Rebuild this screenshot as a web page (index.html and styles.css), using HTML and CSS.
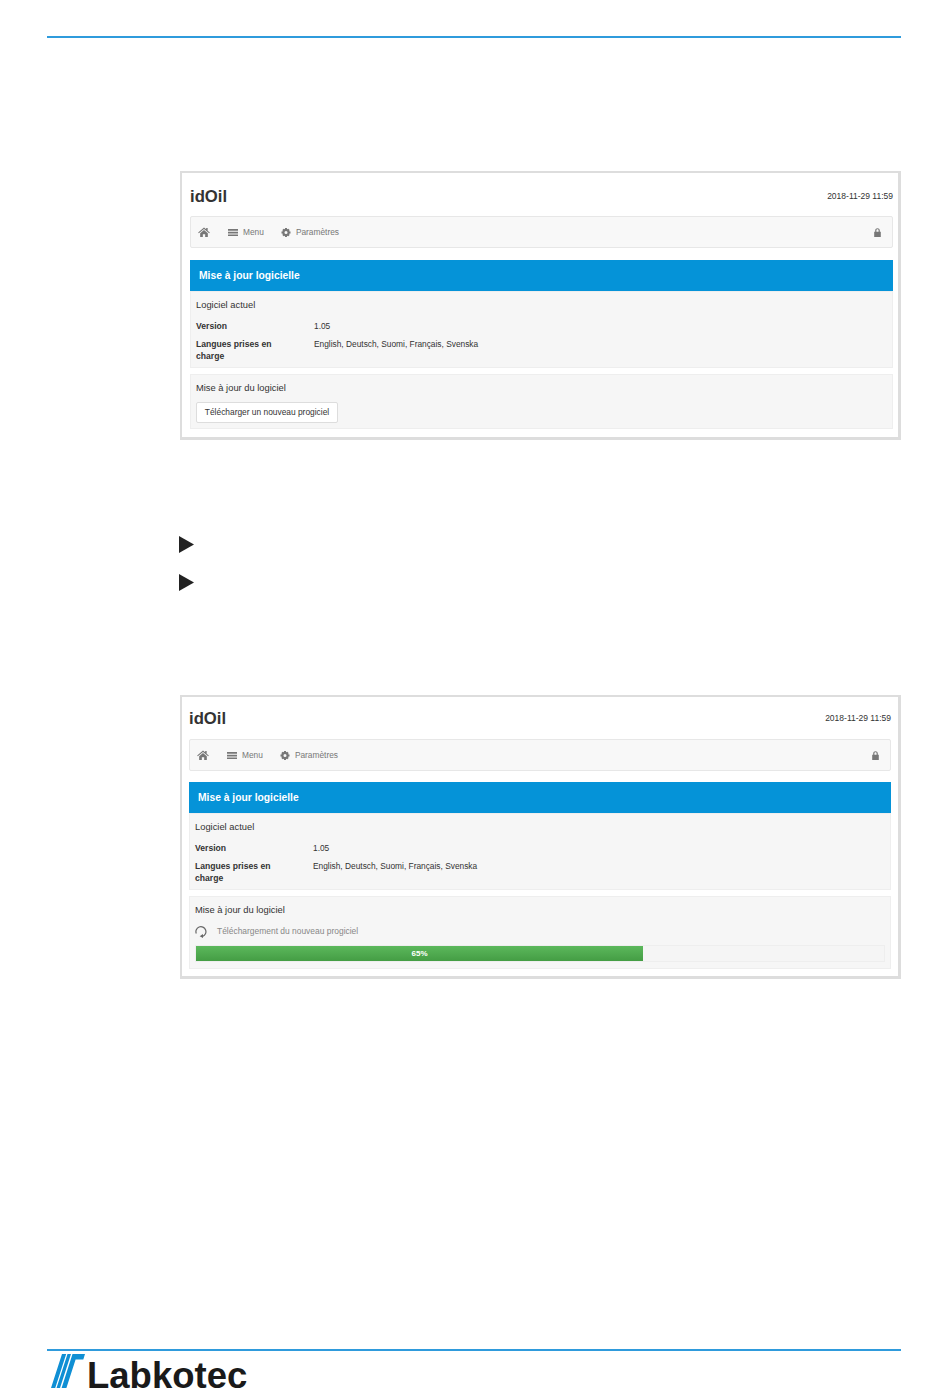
FILE: index.html
```html
<!DOCTYPE html>
<html lang="fr">
<head>
  <meta charset="UTF-8" />
  <title>idOil - Mise à jour logicielle</title>
  <link rel="stylesheet" href="styles.css">
</head>
<body>
<div class="page">
  <div class="top-rule"></div>

  <div class="screen screen-first">
    <div class="screen-head">
      <span class="brand">idOil</span>
      <span class="stamp">2018-11-29 11:59</span>
    </div>
    <div class="navbar">
      <svg class="nav-home" viewBox="0 0 14 12"><path d="M7 0.5 L9.6 2.8 V1.2 H11.4 V4.4 L14 6.7 L13.2 7.6 L7 2.3 L0.8 7.6 L0 6.7 Z M2.4 7.6 L7 3.6 L11.6 7.6 V12 H8.4 V8.6 H5.6 V12 H2.4 Z"/></svg>
      <span class="nav-item">
        <svg class="nav-icon" viewBox="0 0 10 8"><path d="M0 0.5 H10 V2.2 H0 Z M0 3.2 H10 V4.9 H0 Z M0 5.9 H10 V7.6 H0 Z"/></svg>
        Menu
      </span>
      <span class="nav-item">
        <svg class="nav-icon" viewBox="0 0 10 10"><path fill-rule="evenodd" d="M4 0 H6 L6.3 1.4 L7.6 0.9 L9 2.3 L8.4 3.6 L10 4 V6 L8.4 6.4 L9 7.7 L7.6 9.1 L6.3 8.6 L6 10 H4 L3.7 8.6 L2.4 9.1 L1 7.7 L1.6 6.4 L0 6 V4 L1.6 3.6 L1 2.3 L2.4 0.9 L3.7 1.4 Z M5 3.3 A1.7 1.7 0 1 0 5 6.7 A1.7 1.7 0 1 0 5 3.3 Z"/></svg>
        Paramètres
      </span>
      <svg class="nav-lock" viewBox="0 0 7 9"><path fill-rule="evenodd" d="M0.2 3.8 H1.2 V2.4 C1.2 -0.6 5.8 -0.6 5.8 2.4 V3.8 H6.8 V9 H0.2 Z M2.4 3.8 H4.6 V2.4 C4.6 1 2.4 1 2.4 2.4 Z"/></svg>
    </div>
    <div class="banner">Mise à jour logicielle</div>
    <div class="panel panel-current">
      <div class="panel-title">Logiciel actuel</div>
      <div class="info-row"><b class="info-key">Version</b><span>1.05</span></div>
      <div class="info-row"><b class="info-key">Langues prises en charge</b><span>English, Deutsch, Suomi, Français, Svenska</span></div>
    </div>
    <div class="panel panel-update">
      <div class="panel-title">Mise à jour du logiciel</div>
      <button class="upload-btn">Télécharger un nouveau progiciel</button>
    </div>
  </div>

  <div class="steps">
    <div class="step-arrow"></div>
    <div class="step-arrow"></div>
  </div>

  <div class="screen screen-second">
    <div class="screen-head">
      <span class="brand">idOil</span>
      <span class="stamp">2018-11-29 11:59</span>
    </div>
    <div class="navbar">
      <svg class="nav-home" viewBox="0 0 14 12"><path d="M7 0.5 L9.6 2.8 V1.2 H11.4 V4.4 L14 6.7 L13.2 7.6 L7 2.3 L0.8 7.6 L0 6.7 Z M2.4 7.6 L7 3.6 L11.6 7.6 V12 H8.4 V8.6 H5.6 V12 H2.4 Z"/></svg>
      <span class="nav-item">
        <svg class="nav-icon" viewBox="0 0 10 8"><path d="M0 0.5 H10 V2.2 H0 Z M0 3.2 H10 V4.9 H0 Z M0 5.9 H10 V7.6 H0 Z"/></svg>
        Menu
      </span>
      <span class="nav-item">
        <svg class="nav-icon" viewBox="0 0 10 10"><path fill-rule="evenodd" d="M4 0 H6 L6.3 1.4 L7.6 0.9 L9 2.3 L8.4 3.6 L10 4 V6 L8.4 6.4 L9 7.7 L7.6 9.1 L6.3 8.6 L6 10 H4 L3.7 8.6 L2.4 9.1 L1 7.7 L1.6 6.4 L0 6 V4 L1.6 3.6 L1 2.3 L2.4 0.9 L3.7 1.4 Z M5 3.3 A1.7 1.7 0 1 0 5 6.7 A1.7 1.7 0 1 0 5 3.3 Z"/></svg>
        Paramètres
      </span>
      <svg class="nav-lock" viewBox="0 0 7 9"><path fill-rule="evenodd" d="M0.2 3.8 H1.2 V2.4 C1.2 -0.6 5.8 -0.6 5.8 2.4 V3.8 H6.8 V9 H0.2 Z M2.4 3.8 H4.6 V2.4 C4.6 1 2.4 1 2.4 2.4 Z"/></svg>
    </div>
    <div class="banner">Mise à jour logicielle</div>
    <div class="panel panel-current">
      <div class="panel-title">Logiciel actuel</div>
      <div class="info-row"><b class="info-key">Version</b><span>1.05</span></div>
      <div class="info-row"><b class="info-key">Langues prises en charge</b><span>English, Deutsch, Suomi, Français, Svenska</span></div>
    </div>
    <div class="panel panel-progress">
      <div class="panel-title">Mise à jour du logiciel</div>
      <div class="download-row">
        <svg class="spinner" viewBox="0 0 12 12"><path d="M1.3 7.6 A5 5 0 1 1 7.6 10.4" fill="none" stroke="#666" stroke-width="1.2"/><path d="M8 7.9 L4.7 10.2 L8 12 Z" fill="#666"/></svg>
        <span>Téléchargement du nouveau progiciel</span>
      </div>
      <div class="progress">
        <div class="progress-bar" style="width: 65%">65%</div>
      </div>
    </div>
  </div>

  <div class="footer">
    <div class="bottom-rule"></div>
    <div class="logo">
      <svg class="logo-mark" viewBox="0 0 34 34"><path d="M11 0 H15.2 L4.2 34 H0 Z M16.5 0 H20 L9 34 H5.5 Z M21.5 0 H34 L32.3 5.5 H24.6 L15.4 34 H10.6 Z"/></svg>
      <span class="logo-text">Labkotec</span>
    </div>
  </div>
</div>
</body>
</html>
```

FILE: styles.css
```css
html, body {
  margin: 0;
  height: 1388px;
  overflow: hidden;
  background: #fff;
}
body {
  font-family: "Liberation Sans", Arial, sans-serif;
  color: #333;
}
.page {
  padding: 36px 49px 0 47px;
}
.top-rule, .bottom-rule {
  height: 2px;
  background: #2f9bdc;
}

.screen {
  box-sizing: border-box;
  margin-left: 133px;
  border: 2px solid #ddd;
  border-right-width: 3px;
  border-bottom-width: 3px;
  background: #fff;
  padding: 0 5px 0 8px;
  font-size: 8.35px;
}
.screen-first {
  margin-top: 133px;
  height: 269px;
}
.screen-second {
  margin-top: 104px;
  height: 284px;
  padding-left: 7px;
  padding-right: 7px;
}
.screen-head {
  box-sizing: border-box;
  display: flex;
  justify-content: space-between;
  align-items: center;
  height: 43px;
}
.screen-first .screen-head {
  padding-top: 3px;
}
.screen-second .screen-head {
  height: 42px;
}
.brand {
  margin-top: 2px;
  font-size: 16.7px;
  font-weight: bold;
}
.stamp {
  font-size: 8.5px;
}

.navbar {
  box-sizing: border-box;
  display: flex;
  align-items: center;
  height: 32px;
  margin-bottom: 12px;
  padding: 0 7px;
  background: #f8f8f8;
  border: 1px solid #e7e7e7;
  border-radius: 2px;
  color: #777;
}
.screen-second .navbar {
  margin-bottom: 11px;
}
.navbar svg {
  fill: #777;
}
.nav-home {
  width: 12px;
  height: 10px;
  margin-right: 18px;
}
.nav-item {
  display: flex;
  align-items: center;
  gap: 5px;
  margin-right: 17px;
}
.nav-icon {
  width: 10px;
  height: 9px;
}
.nav-lock {
  width: 7px;
  height: 9px;
  margin-left: auto;
  margin-right: 4px;
}

.banner {
  box-sizing: border-box;
  height: 31px;
  line-height: 31px;
  padding-left: 9px;
  background: #0593d8;
  color: #fff;
  font-size: 10.3px;
  font-weight: bold;
}
.screen-second .banner {
  line-height: 32px;
}

.panel {
  box-sizing: border-box;
  padding: 0 5px;
  background: #f6f6f6;
  border: 1px solid #eee;
}
.panel-current {
  height: 77px;
  margin-bottom: 6px;
}
.panel-update {
  height: 55px;
}
.panel-progress {
  height: 73px;
}
.panel-title {
  padding-top: 1px;
  font-size: 9.35px;
  line-height: 25px;
}
.panel-current .panel-title {
  margin-bottom: 2px;
}
.info-row {
  display: grid;
  grid-template-columns: 118px 1fr;
  line-height: 12px;
  margin-bottom: 6px;
}
.info-key {
  max-width: 90px;
  font-size: 8.6px;
}
.upload-btn {
  display: block;
  box-sizing: border-box;
  height: 21px;
  width: 142px;
  margin-top: 1px;
  padding: 0 0 2px;
  background: #fff;
  border: 1px solid #ddd;
  border-radius: 2px;
  font-family: inherit;
  font-size: 8.4px;
  color: #333;
}

.download-row {
  display: flex;
  align-items: center;
  gap: 10px;
  height: 15px;
  font-size: 8.45px;
  color: #888;
}
.spinner {
  width: 12px;
  height: 12px;
  margin-top: 3px;
}
.progress {
  box-sizing: border-box;
  height: 17px;
  margin-top: 7px;
  background: #f5f5f5;
  border: 1px solid #eee;
}
.progress-bar {
  height: 100%;
  background: linear-gradient(#5cb85c, #449d44);
  color: #fff;
  font-size: 8px;
  font-weight: bold;
  line-height: 15px;
  text-align: center;
}

.steps {
  margin: 96px 0 0 132px;
  display: flex;
  flex-direction: column;
  gap: 21px;
}
.step-arrow {
  width: 15px;
  height: 17px;
  background: #222;
  clip-path: polygon(0 0, 100% 50%, 0 100%);
}

.footer {
  margin-top: 370px;
}
.logo {
  display: flex;
  align-items: flex-start;
  margin: 3px 0 0 4px;
}
.logo-mark {
  width: 34px;
  height: 34px;
  fill: #0f8fd4;
  flex: none;
}
.logo-text {
  margin: 1px 0 0 2px;
  font-size: 36.5px;
  line-height: 42px;
  font-weight: bold;
  color: #1a1a1a;
}
```
